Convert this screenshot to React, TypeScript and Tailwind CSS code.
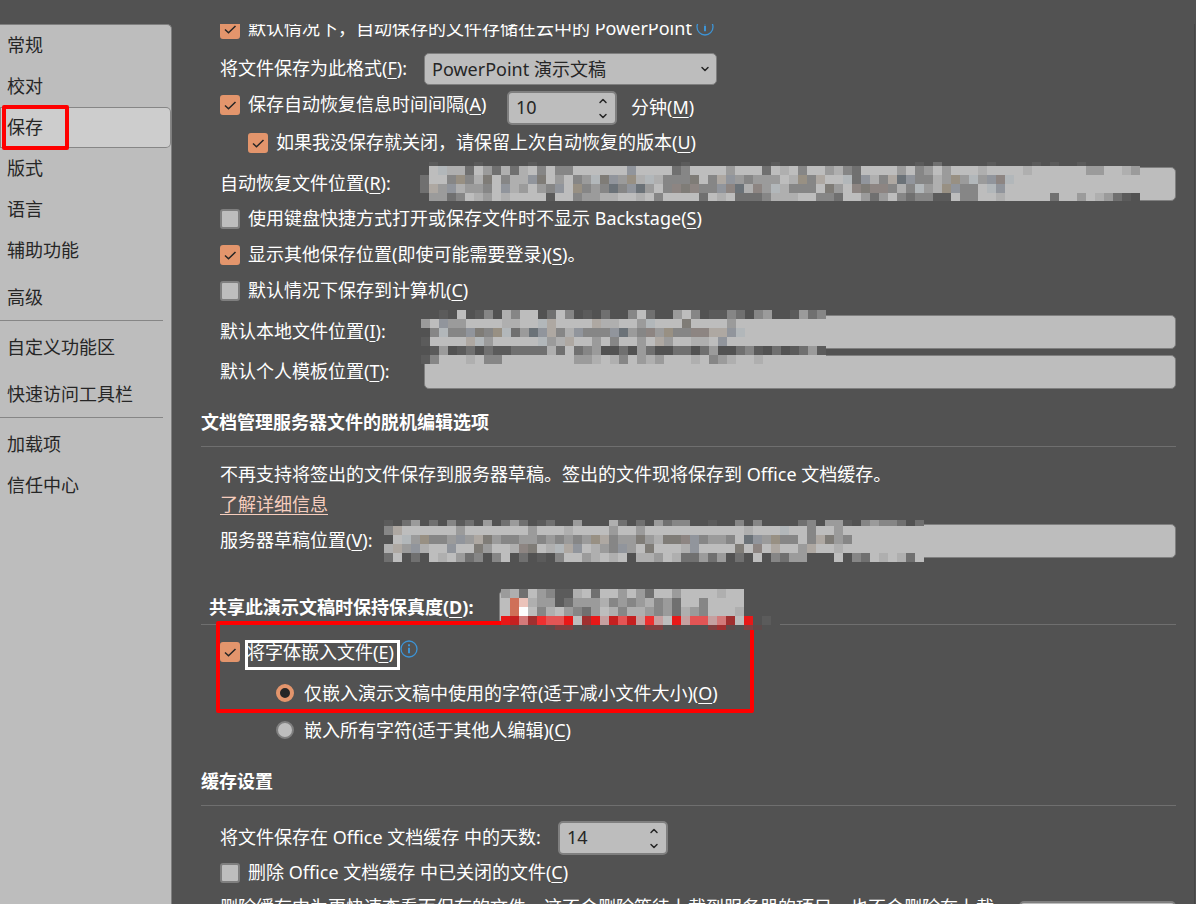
import { useState, type ReactNode } from "react";
import { clsx } from "clsx";
import { ChevronDown, ChevronUp } from "lucide-react";

// ---------- pixelated cover for private paths ----------

const CELL = 9;

const SHADES: Record<string, string> = {
  ".": "#525252",
  a: "#5b5b5b",
  b: "#707070",
  c: "#868686",
  d: "#9b9b9b",
  e: "#afafaf",
  f: "#bdbdbd",
  t: "#989083",
  u: "#91959c",
  v: "#aea8a2",
  w: "#b2b7ba",
  x: "#7f7c77",
  y: "#6b7278",
  z: "#8d8582",
  W: "#fdfdfd",
  T: "#cf7058",
  K: "#ebc3ba",
  R: "#e81818",
  S: "#c52020",
  N: "#ee3030",
  O: "#e35555",
  P: "#d37a7a",
  Q: "#c5a0a0",
  D: "#a03030",
  "1": "#5e4a4a",
  "2": "#804040",
  "3": "#a03030",
};

interface MosaicRow {
  h: number;
  cells: string;
}

const AUTO_RECOVER: MosaicRow[] = [
  { h: 4, cells: ".a....a.....a................a.........a...............a.b.....a....a.a..a....." },
  { h: 9, cells: ".fweebfdbebefcfccffffffuffffbcffffdfffbfefcffdecbffffdfcdfdfffeffffeffffffddffed" },
  { h: 9, cells: "bffctcexfceeuxfdfcdwxudtewecccxfcvudcdddfetcvffwbuecvyuccedtdwduzwffffffffffffff" },
  { h: 9, cells: "bvdueddcfuedfdcuftcdcycuydfczxzccuzyezdwecccfxdfzxzzcecwdetuccfwufffffffffffffff" },
  { h: 8, cells: ".ddbcfedfeffffaffcddeeffefcffffbfefbbbceeeffccbffdbdfcbccaafccffefffffbffdfedba." },
];

const LOCAL_FOLDER: MosaicRow[] = [
  { h: 9, cells: "..a.f.ac.ecff.bfc.a.b..cfb..dfc.aacb.cd..adbc" },
  { h: 9, cells: "dfuddffffeeffwvffffveeffdwfffxffffdffffffffff" },
  { h: 9, cells: ".cwccuxctwbdyuvceucccuydczdtcczzvvuwfffffffff" },
  { h: 9, cells: "affffvwdfffffwdevffdfcffdfvdffeefufffffffffff" },
  { h: 9, cells: ".ad.ab.baabbbbebfbcd..b.db..bb.bd..bca.b.abda" },
  { h: 9, cells: "acfffefccffffffffddefecfdedfffefcdeffefffffff" },
];

const SERVER_DRAFTS: MosaicRow[] = [
  { h: 6, cells: "a.bd.b.cab.d.bdb.ab..d...eb.b.dbcc..a..c.c....bc.dda.cdccb.b" },
  { h: 9, cells: "cvffffffdfffffffdfffeffffdffdfffffffffffefffwffcffdfffffffff" },
  { h: 9, cells: ".fwdtccdudvxdccddcdcdcdtvcddxdexxzucddcfyudtccfcvxdcffffffff" },
  { h: 9, cells: "evdueffuffxdffezxfewvufedcudfxfffeuffffxfzfvffdvffefffffffff" },
  { h: 9, cells: "bf.b.fefdbc.cf.b.a.cffdefef.eedfebbdbd.b.f.cbdd...f.cbfefebf" },
];

const SHARED_FILE: MosaicRow[] = [
  { h: 9, cells: "debfdcaaefbffdfdbffdffffeff" },
  { h: 9, cells: "fTKeddabdddecdcdecdbffcffff" },
  { h: 9, cells: "fTWfcefdcbdfeceedcdbedcfffe" },
  { h: 9, cells: "RSPDNOORfDRQSOSQNQfRQOOQPDfR.a." },
  { h: 5, cells: ".1...122.1......22.1...231.21.." },
];

const Mosaic = ({ rows, className }: { rows: MosaicRow[]; className: string }) => {
  const cols = Math.max(...rows.map((r) => r.cells.length));
  const height = rows.reduce((sum, r) => sum + r.h, 0);
  let y = 0;

  return (
    <svg
      aria-hidden="true"
      width={cols * CELL}
      height={height}
      shapeRendering="crispEdges"
      className={clsx("pointer-events-none absolute z-10 max-w-none", className)}
    >
      {rows.map((row, r) => {
        const top = y;
        y += row.h;
        return row.cells.split("").map((c, i) => (
          <rect key={`${r}-${i}`} x={i * CELL} y={top} width={CELL} height={row.h} fill={SHADES[c]} />
        ));
      })}
    </svg>
  );
};

// ---------- small controls ----------

const Key = ({ children }: { children: ReactNode }) => (
  <>
    (<u className="decoration-1 underline-offset-3">{children}</u>)
  </>
);

const CheckBox = ({ id, checked }: { id: string; checked: boolean }) => (
  <span className="grid size-5 shrink-0">
    <input
      id={id}
      type="checkbox"
      defaultChecked={checked}
      className="peer col-start-1 row-start-1 size-5 appearance-none rounded-[3px] border-2 border-[#7f7f7f] bg-[#bdbdbd] checked:border-[#e3956c] checked:bg-[#e3956c]"
    />
    <svg
      viewBox="0 0 20 20"
      className="pointer-events-none invisible col-start-1 row-start-1 size-5 fill-none stroke-[#262626] stroke-[1.5] peer-checked:visible"
    >
      <path d="M5 10.5 L8.5 13.8 L15.5 7" />
    </svg>
  </span>
);

interface CheckProps {
  id: string;
  checked?: boolean;
  className?: string;
  children: ReactNode;
}

const Check = ({ id, checked = false, className, children }: CheckProps) => (
  <label htmlFor={id} className={clsx("flex items-center gap-2 whitespace-nowrap", className)}>
    <CheckBox id={id} checked={checked} />
    <span className="pb-[2px]">{children}</span>
  </label>
);

const Radio = ({ id, checked = false, children }: CheckProps) => (
  <label htmlFor={id} className="flex h-[37px] items-center gap-2.5 pl-[75px] whitespace-nowrap">
    <input
      id={id}
      type="radio"
      name="embed"
      defaultChecked={checked}
      className="size-[18px] shrink-0 appearance-none rounded-full border-2 border-[#7f7f7f] bg-[#bdbdbd] checked:border-4 checked:border-[#e3956c] checked:bg-[#262626]"
    />
    <span>{children}</span>
  </label>
);

const Spinner = ({ id, initial }: { id: string; initial: number }) => {
  const [value, setValue] = useState(initial);
  return (
    <div className="flex h-[34px] w-[110px] rounded-[5px] border-2 border-[#7f7f7f] bg-[#bdbdbd] text-[#262626]">
      <input
        id={id}
        type="number"
        value={value}
        onChange={(e) => setValue(Number(e.target.value))}
        className="min-w-0 flex-1 bg-transparent pb-[2px] pl-[7px] outline-none [appearance:textfield] [&::-webkit-inner-spin-button]:appearance-none"
      />
      <div className="flex w-6 flex-col">
        <button type="button" aria-label="增加" onClick={() => setValue(value + 1)} className="grid flex-1 place-items-center">
          <ChevronUp className="size-3" strokeWidth={3} />
        </button>
        <button type="button" aria-label="减少" onClick={() => setValue(value - 1)} className="grid flex-1 place-items-center">
          <ChevronDown className="size-3" strokeWidth={3} />
        </button>
      </div>
    </div>
  );
};

const InfoIcon = () => (
  <svg viewBox="0 0 18 18" className="size-[18px] shrink-0 fill-none stroke-[#3d94d6]">
    <circle cx="9" cy="9" r="8" strokeWidth="1.3" />
    <path d="M9 7.8 V13.2" strokeWidth="2" />
    <path d="M9 4.2 V6.2" strokeWidth="2" />
  </svg>
);

interface PathFieldProps {
  id: string;
  label: ReactNode;
  labelClass?: string;
  children?: ReactNode;
}

const PathField = ({ id, label, labelClass = "w-[204px]", children }: PathFieldProps) => (
  <div className="flex items-center pt-1.5 pl-[19px]">
    <label htmlFor={id} className={clsx("shrink-0 pb-[2px] whitespace-nowrap", labelClass)}>
      {label}
    </label>
    <div className="relative flex-1">
      <input
        id={id}
        type="text"
        className="block h-[34px] w-full rounded-[5px] border border-[#7f7f7f] bg-[#bdbdbd] px-2 text-[#262626] outline-none"
      />
      {children}
    </div>
  </div>
);

const SectionTitle = ({ children }: { children: ReactNode }) => (
  <h2 className="border-b border-[#6f6f6f] pb-[11px] text-[18px] leading-[26px] font-bold">{children}</h2>
);

// ---------- sidebar ----------

const NAV_GROUPS = [
  ["常规", "校对", "保存", "版式", "语言", "辅助功能", "高级"],
  ["自定义功能区", "快速访问工具栏"],
  ["加载项", "信任中心"],
];

// these two entries sit a little apart from the one above
const SPACED = ["高级", "快速访问工具栏"];

const Sidebar = () => {
  const [active, setActive] = useState("保存");
  return (
    <nav className="w-[172px] shrink-0 rounded-tr-[5px] border-t border-r border-[#7f7f7f] bg-[#bdbdbd] text-[#262626]">
      {NAV_GROUPS.map((group, i) => (
        <div key={group[0]}>
          {i > 0 && <hr className="mt-[2px] mr-2 mb-1.5 border-[#868686]" />}
          {group.map((item) => (
            <div key={item} className={clsx("relative", SPACED.includes(item) && "mt-1.5")}>
              <button
                type="button"
                onClick={() => setActive(item)}
                className={clsx(
                  "block h-[41px] w-full rounded-r-[5px] pb-[2px] pl-[7px] text-left",
                  active === item && "bg-[#cdcdcd] shadow-[inset_0_0_0_1px_#868686]",
                )}
              >
                {item}
              </button>
              {item === "保存" && (
                <span className="pointer-events-none absolute -top-[2px] left-[2px] h-[45px] w-[67px] rounded-xs border-4 border-[#ff0000]" />
              )}
            </div>
          ))}
        </div>
      ))}
    </nav>
  );
};

export default function App() {
  return (
    <div className="flex h-screen overflow-hidden bg-[#525252] pt-6 font-['Noto_Sans','Noto_Sans_CJK_SC',sans-serif] text-[18px] leading-6 text-white">
      <Sidebar />

      <main className="mr-px min-w-0 flex-1 overflow-hidden border-r border-[#464646] pr-[18px] pl-[29px]">
        {/* the list is scrolled, so its first row is cut by the top edge */}
        <section className="-mt-[13px]">
          <div className="flex h-9 items-start gap-1 pl-[19px]">
            <Check id="cloud" checked className="h-9">
              默认情况下，自动保存的文件存储在云中的 PowerPoint
            </Check>
            <span className="pt-[7px]">
              <InfoIcon />
            </span>
          </div>

          <div className="flex h-11 items-center pl-[19px]">
            <label htmlFor="format" className="w-[204px] shrink-0 pb-[2px]">
              将文件保存为此格式<Key>F</Key>:
            </label>
            <div className="grid w-[293px] items-center text-[#262626]">
              <select
                id="format"
                className="col-start-1 row-start-1 h-8 w-full appearance-none rounded-[5px] border border-[#7f7f7f] bg-[#bdbdbd] px-[7px]"
              >
                <option>PowerPoint 演示文稿</option>
              </select>
              <ChevronDown
                strokeWidth={3}
                className="pointer-events-none col-start-1 row-start-1 mr-1.5 size-3 justify-self-end"
              />
            </div>
          </div>

          <div className="flex h-[34px] pl-[19px]">
            <Check id="recover" checked className="h-7 w-[287px]">
              保存自动恢复信息时间间隔<Key>A</Key>
            </Check>
            <Spinner id="minutes" initial={10} />
            <label htmlFor="minutes" className="self-center pb-[2px] pl-[14px]">
              分钟<Key>M</Key>
            </label>
          </div>

          <Check id="keep" checked className="h-9 pl-[47px]">
            如果我没保存就关闭，请保留上次自动恢复的版本<Key>U</Key>
          </Check>

          <PathField id="recover-path" label={<>自动恢复文件位置<Key>R</Key>:</>}>
            <Mosaic rows={AUTO_RECOVER} className="-top-[5px] -left-1" />
          </PathField>

          <Check id="backstage" className="h-9 pl-[19px]">
            使用键盘快捷方式打开或保存文件时不显示 Backstage<Key>S</Key>
          </Check>
          <Check id="places" checked className="h-9 pl-[19px]">
            显示其他保存位置(即使可能需要登录)<Key>S</Key>。
          </Check>
          <Check id="computer" className="h-9 pl-[19px]">
            默认情况下保存到计算机<Key>C</Key>
          </Check>

          <PathField id="local-path" label={<>默认本地文件位置<Key>I</Key>:</>}>
            <Mosaic rows={LOCAL_FOLDER} className="-top-[5px] -left-[3px]" />
          </PathField>
          <PathField id="template-path" label={<>默认个人模板位置<Key>T</Key>:</>} />
        </section>

        <section className="mt-5">
          <SectionTitle>文档管理服务器文件的脱机编辑选项</SectionTitle>
          <div className="mt-[15px] mb-[2px] pl-[19px]">
            <p>不再支持将签出的文件保存到服务器草稿。签出的文件现将保存到 Office 文档缓存。</p>
            <a href="#details" className="mt-1.5 inline-block text-[#f6cdbd] underline decoration-1 underline-offset-3">
              了解详细信息
            </a>
          </div>
          <PathField id="draft-path" labelClass="w-[164px]" label={<>服务器草稿位置<Key>V</Key>:</>}>
            <Mosaic rows={SERVER_DRAFTS} className="-top-1 left-0" />
          </PathField>
        </section>

        <section className="relative mt-8">
          <div className="flex h-[35px] items-center border-b border-[#6f6f6f] pl-2">
            <label htmlFor="shared" className="w-[290px] shrink-0 font-bold">
              共享此演示文稿时保持保真度<Key>D</Key>:
            </label>
            <div className="relative w-[245px]">
              <select
                id="shared"
                className="block h-[34px] w-full appearance-none rounded-[5px] border border-[#7f7f7f] bg-[#bdbdbd]"
              />
              <Mosaic rows={SHARED_FILE} className="-top-px left-[2px]" />
            </div>
          </div>

          <div className="flex items-start pt-[15px] pl-[19px]">
            <label htmlFor="embed-fonts" className="flex items-start gap-[5px]">
              <span className="pt-[2px]">
                <CheckBox id="embed-fonts" checked />
              </span>
              <span className="h-[30px] w-[155px] pl-[2px] whitespace-nowrap shadow-[inset_0_0_0_3px_white]">
                将字体嵌入文件<Key>E</Key>
              </span>
            </label>
            <InfoIcon />
          </div>

          <div className="pt-1">
            <Radio id="used-only" checked>
              仅嵌入演示文稿中使用的字符(适于减小文件大小)<Key>O</Key>
            </Radio>
            <Radio id="all-chars">
              嵌入所有字符(适于其他人编辑)<Key>C</Key>
            </Radio>
          </div>

          <span className="pointer-events-none absolute top-[31px] left-[15px] h-[92px] w-[538px] rounded-xs border-4 border-[#ff0000]" />
        </section>

        <section className="mt-5">
          <SectionTitle>缓存设置</SectionTitle>
          <div className="mt-[15px] flex items-center pl-[19px]">
            <label htmlFor="days" className="w-[338px] shrink-0 pb-[2px]">
              将文件保存在 Office 文档缓存 中的天数:
            </label>
            <Spinner id="days" initial={14} />
          </div>
          <Check id="closed" className="h-9 pl-[19px]">
            删除 Office 文档缓存 中已关闭的文件<Key>C</Key>
          </Check>
          <div className="mt-1 flex items-start justify-between pl-[19px]">
            <p className="w-[780px]">
              删除缓存中为更快速查看而保存的文件。这不会删除等待上载到服务器的项目，也不会删除在上载时出现问题的项目。
            </p>
            <button
              type="button"
              className="mt-1.5 h-[34px] w-[157px] rounded-[5px] border-2 border-[#7f7f7f] bg-[#bdbdbd] text-[#262626]"
            >
              删除缓存文件
            </button>
          </div>
        </section>
      </main>
    </div>
  );
}
